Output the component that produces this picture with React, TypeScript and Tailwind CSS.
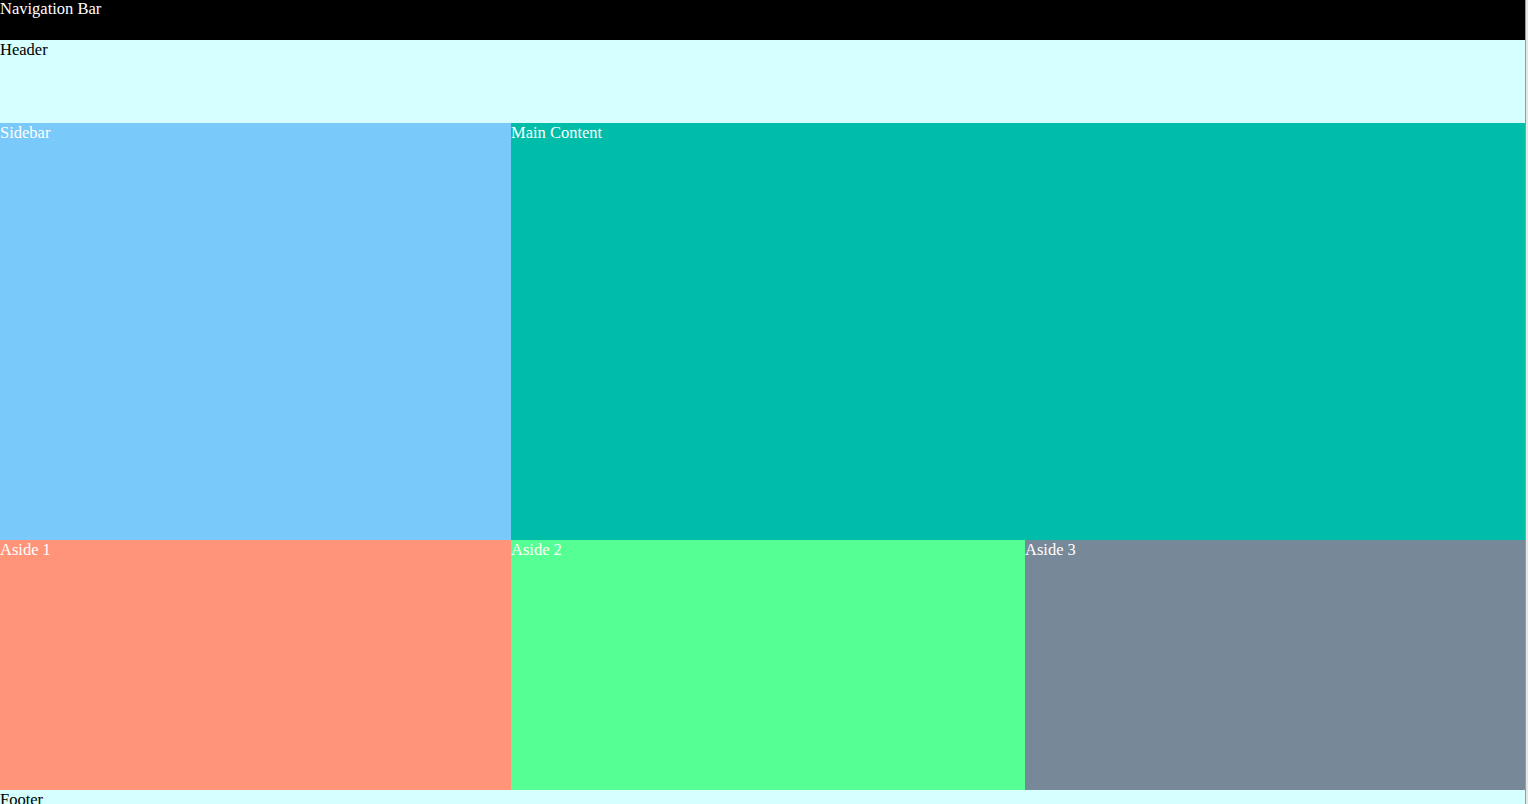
export default function App() {
  return (
    <div className="flex w-[1528px] bg-[#e6e6e6]">
      <div className="grid w-[1525px] grid-cols-[511px_514px_1fr] grid-rows-[40px_83px_417px_250px_40px] font-['Liberation_Serif',serif] text-[16.5px] leading-[18px]">
        {/* Top bars */}
        <div className="col-span-3 bg-black text-white">Navigation Bar</div>
        <div className="col-span-3 bg-[#d6ffff] text-black pt-[1px]">Header</div>

        {/* Body */}
        <div className="bg-[#79c9fa] text-white pt-[1px]">Sidebar</div>
        <div className="col-span-2 bg-[#00bdaa] text-white pt-[1px]">Main Content</div>

        {/* Asides */}
        <div className="bg-[#ff9478] text-white pt-[1px]">Aside 1</div>
        <div className="bg-[#55ff94] text-white pt-[1px]">Aside 2</div>
        <div className="bg-[#778899] text-white pt-[1px]">Aside 3</div>

        <div className="col-span-3 bg-[#d6ffff] text-black pt-[1px]">Footer</div>
      </div>
      {/* thin scrollbar strip on the right edge */}
      <div className="w-px bg-[#9a9a9a]" />
    </div>
  )
}
